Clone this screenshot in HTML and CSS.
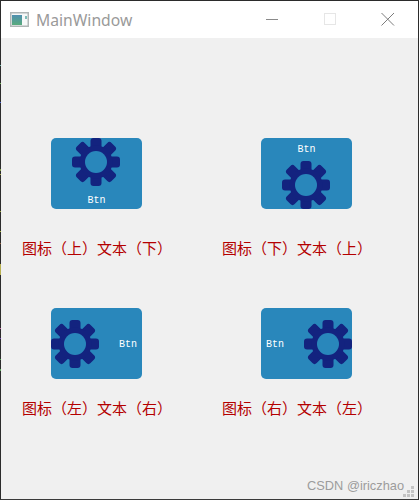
FILE: index.html
```html
<!DOCTYPE html>
<html lang="zh-CN">
<head>
<meta charset="utf-8">
<title>MainWindow</title>
<link rel="stylesheet" href="styles.css">
</head>
<body>
<svg class="defs" width="0" height="0" aria-hidden="true">
  <defs>
    <linearGradient id="shot" x1="0" y1="0" x2="0" y2="1">
      <stop offset="0" stop-color="#4f8fb0"/>
      <stop offset="1" stop-color="#58ab7c"/>
    </linearGradient>
  </defs>
  <symbol id="gear" viewBox="0 0 48 48">
    <g fill="#13237f">
      <rect x="18.5" y="0" width="11" height="48" rx="3"/>
      <rect x="0" y="18.5" width="48" height="11" rx="3"/>
      <rect x="18.5" y="-0.5" width="11" height="49" rx="3" transform="rotate(45 24 24)"/>
      <rect x="-0.5" y="18.5" width="49" height="11" rx="3" transform="rotate(45 24 24)"/>
      <circle cx="24" cy="24" r="16.5"/>
    </g>
    <circle cx="24" cy="24" r="11" fill="#2987bb"/>
  </symbol>
</svg>
<div class="window">
  <div class="edge-specks"></div>
  <header class="titlebar">
    <svg class="app-icon" width="20" height="16" viewBox="0 0 20 16">
      <rect x="0.75" y="0.75" width="17.5" height="13.5" fill="#f6f8f8" stroke="#b0b6b6" stroke-width="1.5"/>
      <rect x="2" y="3" width="10" height="10" fill="url(#shot)"/>
      <rect x="15" y="4" width="2" height="3" fill="#7fbcb8"/>
    </svg>
    <span class="title">MainWindow</span>
    <div class="controls">
      <svg class="ctl" width="14" height="14" viewBox="0 0 14 14"><path d="M1 6.5H13" stroke="#8a8a8a"/></svg>
      <svg class="ctl" width="14" height="14" viewBox="0 0 14 14"><rect x="1.5" y="0.5" width="11" height="11" fill="none" stroke="#e6e6e6"/></svg>
      <svg class="ctl" width="14" height="14" viewBox="0 0 14 14"><path d="M0.5 0L13 12.5M13 0L0.5 12.5" stroke="#7c7c7c" fill="none"/></svg>
    </div>
  </header>
  <main class="content">
    <section class="grid">
      <div class="cell">
        <button class="tool tool-top"><svg class="gear"><use href="#gear"/></svg><span class="btn-text">Btn</span></button>
        <p class="label">图标（上）文本（下）</p>
      </div>
      <div class="cell">
        <button class="tool tool-bottom"><span class="btn-text">Btn</span><svg class="gear"><use href="#gear"/></svg></button>
        <p class="label">图标（下）文本（上）</p>
      </div>
      <div class="cell">
        <button class="tool tool-left"><svg class="gear"><use href="#gear"/></svg><span class="btn-text">Btn</span></button>
        <p class="label">图标（左）文本（右）</p>
      </div>
      <div class="cell">
        <button class="tool tool-right"><span class="btn-text">Btn</span><svg class="gear"><use href="#gear"/></svg></button>
        <p class="label">图标（右）文本（左）</p>
      </div>
    </section>
    <span class="watermark">CSDN @iriczhao</span>
    <svg class="grip" width="12" height="12" viewBox="0 0 12 12" fill="#c4c4c4">
      <rect x="8" y="0" width="3" height="3"/>
      <rect x="4" y="4" width="3" height="3"/><rect x="8" y="4" width="3" height="3"/>
      <rect x="0" y="8" width="3" height="3"/><rect x="4" y="8" width="3" height="3"/><rect x="8" y="8" width="3" height="3"/>
    </svg>
  </main>
</div>
</body>
</html>
```
FILE: styles.css
```css
* { box-sizing: border-box; }
html, body { margin: 0; padding: 0; }
body { width: 419px; height: 500px; overflow: hidden; background: #f0f0f0; }
.defs { position: absolute; }
.window {
  position: relative;
  width: 419px;
  height: 500px;
  border: 1px solid #2b2b2b;
  border-bottom-color: #3a3a3a;
  display: flex;
  flex-direction: column;
  background: #f0f0f0;
}
.edge-specks {
  position: absolute;
  left: -1px;
  top: 64px;
  width: 1px;
  height: 306px;
  background:
    linear-gradient(#6fb5a8 0 1px, transparent 1px) 0 0 / 1px 1px no-repeat,
    linear-gradient(#6fae55 0 1px, transparent 1px) 0 18px / 1px 1px no-repeat,
    linear-gradient(#4a5fd0 0 1px, transparent 1px) 0 37px / 1px 1px no-repeat,
    linear-gradient(#7f9a4a 0 2px, transparent 2px) 0 104px / 1px 2px no-repeat,
    linear-gradient(#a8a84a 0 1px, transparent 1px) 0 109px / 1px 1px no-repeat,
    linear-gradient(#9aa83f 0 1px, transparent 1px) 0 146px / 1px 1px no-repeat,
    linear-gradient(#a8b83f 0 1px, transparent 1px) 0 166px / 1px 1px no-repeat,
    linear-gradient(#8a5a3a 0 1px, transparent 1px) 0 178px / 1px 1px no-repeat,
    linear-gradient(#b8b050 0 11px, transparent 11px) 0 199px / 1px 11px no-repeat,
    linear-gradient(#c060a0 0 1px, transparent 1px) 0 263px / 1px 1px no-repeat,
    linear-gradient(#7040b0 0 1px, transparent 1px) 0 273px / 1px 1px no-repeat,
    linear-gradient(#50a050 0 1px, transparent 1px) 0 294px / 1px 1px no-repeat,
    linear-gradient(#60a860 0 2px, transparent 2px) 0 304px / 1px 2px no-repeat;
}
.titlebar {
  height: 37px;
  flex: none;
  background: #fff;
  display: flex;
  align-items: center;
  padding-left: 9px;
}
.app-icon { flex: none; margin-right: 6px; }
.title {
  font: 15.7px/20px "Noto Sans", "Open Sans", sans-serif;
  color: #9a9a9a;
}
.controls {
  margin-left: auto;
  display: flex;
  gap: 44px;
  padding-right: 23px;
}
.ctl { display: block; }
.content { position: relative; flex: 1; padding: 100px 0 0 21px; }
.grid {
  display: grid;
  grid-template-columns: 200px 200px;
  grid-template-rows: 119px auto;
  row-gap: 51px;
}
.cell { display: flex; flex-direction: column; align-items: flex-start; }
.tool {
  width: 91px;
  height: 71px;
  margin-left: 29px;
  padding: 0;
  border: 0;
  border-radius: 5px;
  background: #2987bb;
  display: flex;
  align-items: center;
}
.cell:nth-child(even) .tool { margin-left: 39px; }
.gear { width: 48px; height: 48px; flex: none; display: block; }
.btn-text {
  font: 10px/12px "Liberation Mono", "DejaVu Sans Mono", monospace;
  color: #fff;
}
.tool-top { flex-direction: column; justify-content: flex-start; }
.tool-top .gear { margin-right: 1px; }
.tool-top .btn-text { margin-top: 9px; }
.tool-bottom { flex-direction: column; justify-content: flex-end; }
.tool-bottom .gear { margin-right: 1px; }
.tool-bottom .btn-text { margin-bottom: 5px; }
.tool-left { justify-content: space-between; padding-right: 5px; }
.tool-left .btn-text { margin-top: 2px; }
.tool-right { justify-content: space-between; padding-left: 5px; }
.tool-right .btn-text { margin-top: 2px; }
.label {
  margin: 30px 0 0;
  font: 15px/17px "Noto Sans CJK SC", sans-serif;
  color: #b40000;
  white-space: nowrap;
}
.cell:nth-child(n+3) .label { margin-top: 20px; }
.watermark {
  position: absolute;
  right: 14px;
  bottom: 5px;
  font: 12.8px/16px "Liberation Sans", Arial, sans-serif;
  color: #9c9c9c;
}
.grip { position: absolute; right: 3px; bottom: 1px; }
```
